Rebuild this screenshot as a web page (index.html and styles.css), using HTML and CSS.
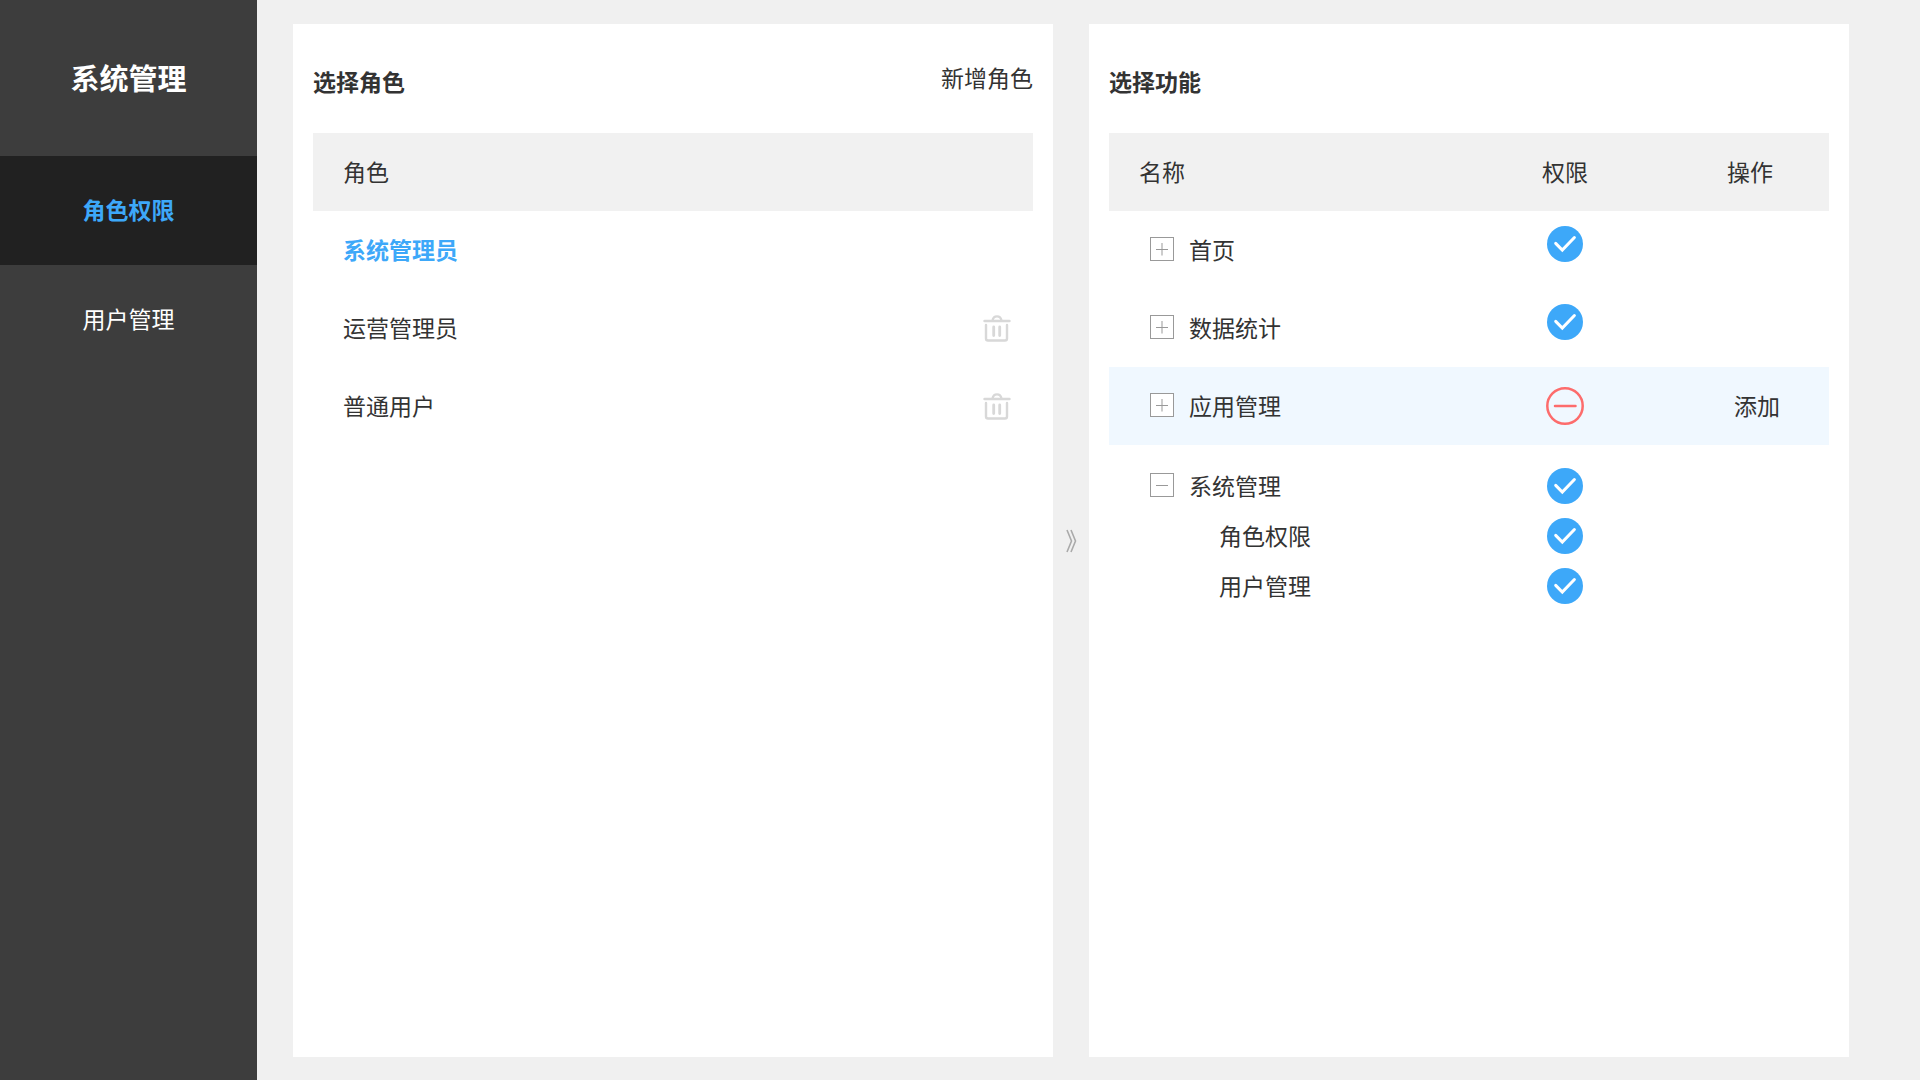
FILE: index.html
```html
<!DOCTYPE html>
<html lang="zh-CN">
  <head>
    <meta charset="UTF-8" />
    <title>系统管理</title>
    <link rel="stylesheet" href="styles.css">
  </head>
  <body>
    <svg class="sprite" aria-hidden="true">
      <symbol id="icon_allow" viewBox="0 0 38 38">
        <circle cx="19" cy="19" r="18" fill="#3da8f9" />
        <path d="M9.7 18.4L16.3 25.1L28.4 12.5" fill="none" stroke="#fff" stroke-width="3" stroke-linecap="round" />
      </symbol>
      <symbol id="icon_deny" viewBox="0 0 38 38">
        <circle cx="19" cy="19" r="17.7" fill="none" stroke="#fd6c6c" stroke-width="2.5" />
        <path d="M9 19H29.5" fill="none" stroke="#fd6c6c" stroke-width="2.5" stroke-linecap="round" />
      </symbol>
      <symbol id="icon_trash" viewBox="0 0 28 28">
        <g fill="none" stroke="#d8d8d8" stroke-width="2.4" stroke-linecap="round">
          <path d="M1.5 6H26.5M9.5 5.5C10.5 0 17.5 0 18.5 5.5" />
          <path d="M3 10V23.5Q3 25.5 5 25.5H22Q24 25.5 24 23.5V10" />
          <path d="M10.7 12V20.5M16.7 12V20.5" stroke-width="2.8" />
        </g>
      </symbol>
      <symbol id="icon_plus" viewBox="0 0 24 24">
        <rect x="0.5" y="0.5" width="23" height="23" fill="#fff" stroke="#999" />
        <path d="M12 6V18.5" stroke="#ccc" stroke-width="2" />
        <path d="M6 12.5H18" stroke="#999" />
      </symbol>
      <symbol id="icon_minus" viewBox="0 0 24 24">
        <rect x="0.5" y="0.5" width="23" height="23" fill="#fff" stroke="#999" />
        <path d="M6 12.5H18" stroke="#999" />
      </symbol>
    </svg>

    <div class="app">
      <aside class="sidebar">
        <h1 class="sidebar_title">系统管理</h1>
        <nav class="menu">
          <a class="menu_item active" href="#roles">角色权限</a>
          <a class="menu_item" href="#users">用户管理</a>
        </nav>
      </aside>

      <main class="content">
        <section class="panel">
          <div class="panel_head">
            <h2>选择角色</h2>
            <button class="text_btn" type="button">新增角色</button>
          </div>
          <table class="roles">
            <thead>
              <tr><th colspan="2">角色</th></tr>
            </thead>
            <tbody>
              <tr class="selected">
                <td>系统管理员</td>
                <td class="remove"></td>
              </tr>
              <tr>
                <td>运营管理员</td>
                <td class="remove">
                  <button class="icon_btn" type="button" aria-label="删除运营管理员"><svg class="trash"><use href="#icon_trash" /></svg></button>
                </td>
              </tr>
              <tr>
                <td>普通用户</td>
                <td class="remove">
                  <button class="icon_btn" type="button" aria-label="删除普通用户"><svg class="trash"><use href="#icon_trash" /></svg></button>
                </td>
              </tr>
            </tbody>
          </table>
        </section>

        <div class="divider">
          <svg class="arrows" viewBox="0 0 12 24" aria-hidden="true">
            <path d="M2 1L6.500 12L2 23M6 1L10.500 12L6 23" fill="none" stroke="#aaa" stroke-width="1.6" />
          </svg>
        </div>

        <section class="panel">
          <div class="panel_head">
            <h2>选择功能</h2>
          </div>
          <table class="features">
            <thead>
              <tr>
                <th class="name">名称</th>
                <th class="perm">权限</th>
                <th class="action">操作</th>
              </tr>
            </thead>
            <tbody>
              <tr class="raised">
                <td class="name">
                  <div class="node">
                    <button class="icon_btn" type="button" aria-label="展开首页"><svg class="toggle"><use href="#icon_plus" /></svg></button>
                    <label for="perm_home">首页</label>
                  </div>
                </td>
                <td class="perm">
                  <span class="check"><input id="perm_home" type="checkbox" checked /><svg><use href="#icon_allow" /></svg></span>
                </td>
                <td class="action"></td>
              </tr>
              <tr class="raised">
                <td class="name">
                  <div class="node">
                    <button class="icon_btn" type="button" aria-label="展开数据统计"><svg class="toggle"><use href="#icon_plus" /></svg></button>
                    <label for="perm_stat">数据统计</label>
                  </div>
                </td>
                <td class="perm">
                  <span class="check"><input id="perm_stat" type="checkbox" checked /><svg><use href="#icon_allow" /></svg></span>
                </td>
                <td class="action"></td>
              </tr>
              <tr class="current">
                <td class="name">
                  <div class="node">
                    <button class="icon_btn" type="button" aria-label="展开应用管理"><svg class="toggle"><use href="#icon_plus" /></svg></button>
                    <label for="perm_app">应用管理</label>
                  </div>
                </td>
                <td class="perm">
                  <span class="check"><input id="perm_app" type="checkbox" /><svg><use href="#icon_deny" /></svg></span>
                </td>
                <td class="action"><button class="text_btn" type="button">添加</button></td>
              </tr>
              <tr class="parent">
                <td class="name">
                  <div class="node">
                    <button class="icon_btn" type="button" aria-label="收起系统管理"><svg class="toggle"><use href="#icon_minus" /></svg></button>
                    <label for="perm_system">系统管理</label>
                  </div>
                </td>
                <td class="perm">
                  <span class="check"><input id="perm_system" type="checkbox" checked /><svg><use href="#icon_allow" /></svg></span>
                </td>
                <td class="action"></td>
              </tr>
              <tr class="child">
                <td class="name"><label for="perm_role">角色权限</label></td>
                <td class="perm">
                  <span class="check"><input id="perm_role" type="checkbox" checked /><svg><use href="#icon_allow" /></svg></span>
                </td>
                <td class="action"></td>
              </tr>
              <tr class="child">
                <td class="name"><label for="perm_user">用户管理</label></td>
                <td class="perm">
                  <span class="check"><input id="perm_user" type="checkbox" checked /><svg><use href="#icon_allow" /></svg></span>
                </td>
                <td class="action"></td>
              </tr>
            </tbody>
          </table>
        </section>
      </main>
    </div>
  </body>
</html>
```
FILE: styles.css
```css
* {
  box-sizing: border-box;
}
body {
  margin: 0;
  font-family: 'Noto Sans CJK SC', sans-serif;
  font-size: 23px;
  line-height: 34px;
  color: #333;
  background-color: #f0f0f0;
}
button {
  padding: 0;
  border: 0;
  background: none;
  font: inherit;
  color: inherit;
  cursor: pointer;
}
.sprite {
  display: none;
}
.app {
  display: flex;
  min-height: 100vh;
}

/* sidebar */
.sidebar {
  flex: none;
  width: 257px;
  background-color: #3d3d3d;
  color: #fff;
  text-align: center;
}
.sidebar_title {
  margin: 0;
  padding-bottom: 2px;
  font-size: 29px;
  font-weight: 700;
  line-height: 154px;
}
.menu_item {
  display: block;
  padding-bottom: 3px;
  line-height: 106px;
  color: #fff;
  text-decoration: none;
}
.menu_item.active {
  background-color: #212121;
  color: #3da8f9;
  font-weight: 700;
}

/* panels */
.content {
  display: flex;
  flex: 1;
  padding: 24px 71px 23px 36px;
}
.panel {
  flex: 1;
  min-width: 0;
  padding: 0 20px;
  background-color: #fff;
}
.panel_head {
  display: flex;
  align-items: center;
  justify-content: space-between;
  height: 109px;
  padding-bottom: 4px;
}
.panel_head h2 {
  margin: 0;
  padding-top: 8px;
  font-size: 23px;
  font-weight: 700;
}
.divider {
  display: flex;
  flex: none;
  align-items: center;
  justify-content: center;
  width: 36px;
}
.arrows {
  width: 12px;
  height: 24px;
}

/* tables */
table {
  width: 100%;
  border-collapse: collapse;
  table-layout: fixed;
}
th,
td {
  height: 78px;
  padding: 0 0 2px;
  font-weight: 400;
  text-align: left;
}
th {
  background-color: #f1f1f1;
}
.icon_btn {
  display: inline-flex;
  vertical-align: middle;
}

.roles th,
.roles td {
  padding-left: 30px;
}
.roles .remove {
  padding-right: 22px;
  padding-bottom: 4px;
  text-align: right;
}
.roles .selected {
  color: #3da8f9;
}
.roles .selected td {
  font-weight: 700;
}
.trash {
  width: 28px;
  height: 28px;
}

.features .name {
  padding-left: 41px;
}
.features th.name {
  padding-left: 30px;
}
.features .perm {
  width: 192px;
  text-align: center;
}
.features .action {
  width: 168px;
  padding-left: 73px;
}
.features th.action {
  padding-left: 66px;
}
.node {
  display: flex;
  align-items: center;
  gap: 15px;
}
.toggle {
  width: 24px;
  height: 24px;
}
.raised .perm {
  padding-bottom: 14px;
}
.current {
  background-color: #f0f8ff;
}
.parent td {
  height: 66px;
  padding-top: 16px;
}
.child td {
  height: 50px;
}
.child .name {
  padding-left: 110px;
}

/* the icon shares one grid cell with the tick box below it */
.check {
  display: inline-grid;
  vertical-align: middle;
}
.check input,
.check svg {
  grid-area: 1 / 1;
  width: 38px;
  height: 38px;
  margin: 0;
}
.check input {
  appearance: none;
  border-radius: 50%;
  cursor: pointer;
}
.check svg {
  pointer-events: none;
}
```
